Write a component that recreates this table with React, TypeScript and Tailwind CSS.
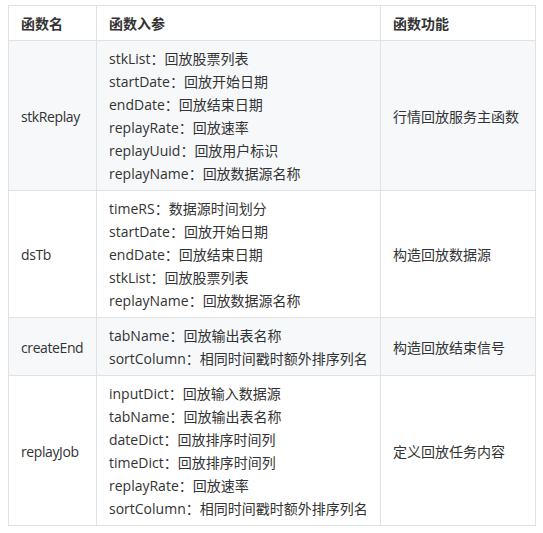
const rows = [
  {
    name: "stkReplay",
    params: [
      ["stkList", "回放股票列表"],
      ["startDate", "回放开始日期"],
      ["endDate", "回放结束日期"],
      ["replayRate", "回放速率"],
      ["replayUuid", "回放用户标识"],
      ["replayName", "回放数据源名称"],
    ],
    desc: "行情回放服务主函数",
  },
  {
    name: "dsTb",
    params: [
      ["timeRS", "数据源时间划分"],
      ["startDate", "回放开始日期"],
      ["endDate", "回放结束日期"],
      ["stkList", "回放股票列表"],
      ["replayName", "回放数据源名称"],
    ],
    desc: "构造回放数据源",
  },
  {
    name: "createEnd",
    params: [
      ["tabName", "回放输出表名称"],
      ["sortColumn", "相同时间戳时额外排序列名"],
    ],
    desc: "构造回放结束信号",
  },
  {
    name: "replayJob",
    params: [
      ["inputDict", "回放输入数据源"],
      ["tabName", "回放输出表名称"],
      ["dateDict", "回放排序时间列"],
      ["timeDict", "回放排序时间列"],
      ["replayRate", "回放速率"],
      ["sortColumn", "相同时间戳时额外排序列名"],
    ],
    desc: "定义回放任务内容",
  },
];

const cell = "border border-[#dfe2e5] px-3 pt-[6px] pb-[5px] align-middle";

export default function App() {
  return (
    <div className="min-h-screen bg-white pl-2 pt-[5px] text-[14px] leading-[23px] text-[#333] [font-family:'Open_Sans','Noto_Sans_CJK_SC',sans-serif]">
      <table className="w-[527px] table-fixed border-collapse">
        <colgroup>
          <col className="w-[88px]" />
          <col className="w-[284px]" />
          <col className="w-[155px]" />
        </colgroup>
        <thead>
          <tr>
            {["函数名", "函数入参", "函数功能"].map((h) => (
              <th key={h} className={cell + " text-left font-bold"}>
                <div className="h-[23px]">{h}</div>
              </th>
            ))}
          </tr>
        </thead>
        <tbody>
          {rows.map((r, i) => (
            <tr key={r.name} className={i % 2 === 1 ? "bg-white" : "bg-[#f6f8fa]"}>
              <td className={cell}>
                <div className="h-[23px] whitespace-nowrap tracking-[-0.4px]">{r.name}</div>
              </td>
              <td className={cell}>
                {r.params.map(([k, v]) => (
                  <div key={k} className="h-[23px] whitespace-nowrap">
                    {k}：{v}
                  </div>
                ))}
              </td>
              <td className={cell}>
                <div className="h-[23px]">{r.desc}</div>
              </td>
            </tr>
          ))}
        </tbody>
      </table>
    </div>
  );
}
